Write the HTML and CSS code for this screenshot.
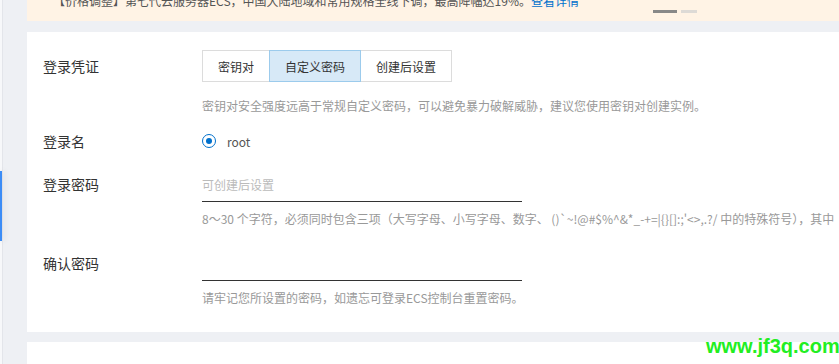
FILE: index.html
```html
<!DOCTYPE html>
<html lang="zh-CN">
<head>
    <meta charset="UTF-8">
    <title>创建实例 - 系统配置</title>
    <link rel="stylesheet" href="styles.css">
</head>
<body>

<div class="page">

    <!-- left rail with the active step marker -->
    <div class="rail">
        <div class="rail-mark"></div>
    </div>

    <div class="main">

        <!-- notice banner (carousel) -->
        <div class="notice">
            <div class="notice-text">【价格调整】第七代云服务器ECS，中国大陆地域和常用规格全线下调，最高降幅达19%。<a href="#">查看详情</a></div>
            <div class="notice-dots">
                <span class="dot dot-on"></span>
                <span class="dot"></span>
            </div>
        </div>

        <!-- login settings -->
        <div class="card">
            <div class="form-row">
                <div class="label">登录凭证</div>
                <div class="seg">
                    <button type="button" class="seg-btn">密钥对</button>
                    <button type="button" class="seg-btn active">自定义密码</button>
                    <button type="button" class="seg-btn">创建后设置</button>
                </div>
            </div>
            <p class="hint hint-first">密钥对安全强度远高于常规自定义密码，可以避免暴力破解威胁，建议您使用密钥对创建实例。</p>

            <div class="form-row row-name">
                <div class="label">登录名</div>
                <label class="radio">
                    <span class="radio-dot"></span>
                    <span class="radio-text">root</span>
                </label>
            </div>

            <div class="form-row input-row row-pwd">
                <div class="label">登录密码</div>
                <input type="password" class="line-input" placeholder="可创建后设置">
            </div>
            <p class="hint hint-nowrap">8～30 个字符，必须同时包含三项（大写字母、小写字母、数字、 ()`~!@#$%^&amp;*_-+=|{}[]:;'&lt;&gt;,.?/ 中的特殊符号），其中</p>

            <div class="form-row input-row row-confirm">
                <div class="label">确认密码</div>
                <input type="password" class="line-input">
            </div>
            <p class="hint">请牢记您所设置的密码，如遗忘可登录ECS控制台重置密码。</p>
        </div>

        <div class="card card-next"></div>

    </div>
</div>

<div class="watermark">www.jf3q.com</div>

</body>
</html>
```

FILE: styles.css
```css
body {
    margin: 0;
    padding: 0;
    background-color: #eef0f4;
    font-family: "Noto Sans CJK SC", sans-serif;
    color: #333;
    overflow: hidden;
}

.page {
    display: flex;
    height: 364px;
}

/* left rail */
.rail {
    width: 25px;
    flex-shrink: 0;
    border-left: 2px solid #f7f8fa;
    box-shadow: inset 1px 0 0 #e3e5ea;
}

.rail-mark {
    margin-top: 171px;
    margin-left: -2px;
    width: 2px;
    height: 70px;
    background-color: #3b8cf6;
    box-shadow: 2px 0 6px rgba(0, 0, 0, 0.12);
}

.main {
    flex: 1;
    min-width: 0;
    display: flex;
    flex-direction: column;
}

/* notice banner */
.notice {
    position: relative;
    height: 21px;
    overflow: hidden;
    background-color: #fff3e5;
    margin-bottom: 11px;
}

.notice-text {
    margin-top: -8px;
    padding-left: 26px;
    font-size: 12px;
    line-height: 18px;
    color: #555;
    white-space: nowrap;
}

.notice-text a {
    color: #0070cc;
    text-decoration: none;
}

.notice-dots {
    position: absolute;
    left: 626px;
    top: 10px;
    display: flex;
    gap: 4px;
}

.dot {
    width: 16px;
    height: 3px;
    background-color: #dddad6;
}

.dot-on {
    width: 24px;
    background-color: #888;
}

/* form card */
.card {
    background-color: #fff;
    padding: 18px 0 25px 16px;
    margin-bottom: 10px;
    overflow: hidden;
}

.card-next {
    flex: 1;
    margin-bottom: 0;
    padding: 0;
}

.form-row {
    display: flex;
    align-items: center;
}

.input-row {
    align-items: flex-start;
}

.label {
    width: 159px;
    flex-shrink: 0;
    font-size: 14px;
    line-height: 20px;
    color: #333;
}

.seg {
    display: flex;
}

.seg-btn {
    height: 32px;
    padding: 0 15px;
    margin-right: -1px;
    border: 1px solid #dcdcdc;
    background-color: #fff;
    font-family: inherit;
    font-size: 12px;
    color: #333;
}

.seg-btn.active {
    position: relative;
    z-index: 1;
    background-color: #d7e9f7;
    border-color: #9ccbec;
}

.hint {
    margin: 8px 0 0 159px;
    font-size: 12px;
    line-height: 18px;
    color: #999;
}

.hint-first {
    margin-top: 15px;
}

.hint-nowrap {
    white-space: nowrap;
}

.row-name {
    margin-top: 16px;
}

.radio {
    display: flex;
    align-items: center;
    gap: 11px;
}

.radio-dot {
    width: 12px;
    height: 12px;
    border: 1px solid #0070cc;
    border-radius: 50%;
    display: flex;
    align-items: center;
    justify-content: center;
}

.radio-dot::after {
    content: "";
    width: 6px;
    height: 6px;
    border-radius: 50%;
    background-color: #0070cc;
}

.radio-text {
    font-size: 12px;
    color: #555;
}

.row-pwd {
    margin-top: 23px;
}

.row-confirm {
    margin-top: 25px;
}

.line-input {
    width: 320px;
    height: 20px;
    padding: 0 0 7px 0;
    border: none;
    border-bottom: 1px solid #333;
    outline: none;
    font-family: inherit;
    font-size: 12px;
    color: #333;
}

.line-input::placeholder {
    color: #bbb;
}

/* screenshot watermark */
.watermark {
    position: absolute;
    left: 706px;
    top: 335px;
    font-family: "Liberation Sans", Arial, sans-serif;
    font-weight: bold;
    font-size: 20px;
    color: #22ee22;
}
```
